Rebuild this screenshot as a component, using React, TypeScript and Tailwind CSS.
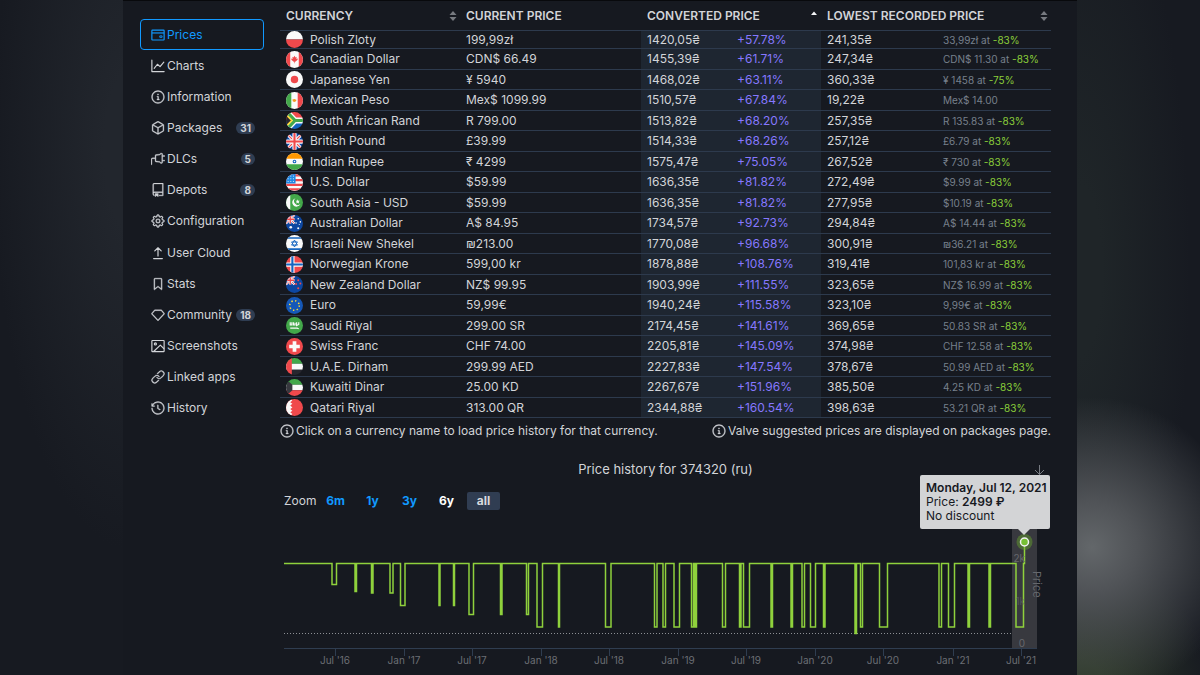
import type { ReactNode } from "react";
import { useId, useState } from "react";
import clsx from "clsx";
import {
  GoBookmark,
  GoGear,
  GoHistory,
  GoInfo,
  GoLink,
  GoPackage,
  GoPlug,
  GoRepo,
  GoRuby,
} from "react-icons/go";

const WalletIcon = () => (
  <svg viewBox="0 0 24 24" className="size-full" fill="none" stroke="currentColor" strokeWidth="2">
    <rect x="1.5" y="3.5" width="21" height="17" rx="1" />
    <path d="M1.5 8.5h21" />
    <path d="M15 13.5h4v2.5h-4z" strokeWidth="1.5" />
  </svg>
);

const ChartIcon = () => (
  <svg viewBox="0 0 24 24" className="size-full" fill="none" stroke="currentColor" strokeWidth="2" strokeLinecap="round" strokeLinejoin="round">
    <path d="M1.5 2v19.5h21" />
    <path d="M5.5 16l5.5-7 4.5 4L22 5.5" />
  </svg>
);

const PushIcon = () => (
  <svg viewBox="0 0 24 24" className="size-full" fill="none" stroke="currentColor" strokeWidth="2" strokeLinecap="round" strokeLinejoin="round">
    <path d="M12 17V3M6.5 8.5L12 3l5.5 5.5M4.5 21.5h15" />
  </svg>
);

const PictureIcon = () => (
  <svg viewBox="0 0 24 24" className="size-full" fill="none" stroke="currentColor" strokeWidth="2" strokeLinejoin="round">
    <rect x="1.5" y="2.5" width="21" height="19" rx="1" />
    <circle cx="7.5" cy="8.5" r="1.8" />
    <path d="M4.500 21.500L16 10.500l6.500 6.500" />
  </svg>
);

const navItems: { label: string; icon: ReactNode; count?: number }[] = [
  { label: "Prices", icon: <WalletIcon /> },
  { label: "Charts", icon: <ChartIcon /> },
  { label: "Information", icon: <GoInfo className="size-full" strokeWidth="0.6" /> },
  { label: "Packages", icon: <GoPackage className="size-full" strokeWidth="0.6" />, count: 31 },
  { label: "DLCs", icon: <GoPlug className="size-full" strokeWidth="0.6" />, count: 5 },
  { label: "Depots", icon: <GoRepo className="size-full" strokeWidth="0.6" />, count: 8 },
  { label: "Configuration", icon: <GoGear className="size-full" strokeWidth="0.6" /> },
  { label: "User Cloud", icon: <PushIcon /> },
  { label: "Stats", icon: <GoBookmark className="size-full" strokeWidth="0.6" /> },
  { label: "Community", icon: <GoRuby className="size-full" strokeWidth="0.6" />, count: 18 },
  { label: "Screenshots", icon: <PictureIcon /> },
  { label: "Linked apps", icon: <GoLink className="size-full" strokeWidth="0.6" /> },
  { label: "History", icon: <GoHistory className="size-full" strokeWidth="0.6" /> },
];

const RED = "#f0494c";
const GREEN = "#43a84a";
const BLUE = "#0d47a1";
const WHITE = "#fafafa";
const BLACK = "#27272f";

const MiniJack = () => (
  <>
    <path d="M0 0h16v16H0z" fill={BLUE} />
    <path d="M0 0l16 16M16 0L0 16" stroke={WHITE} strokeWidth="4" />
    <path d="M0 0l16 16M16 0L0 16" stroke={RED} strokeWidth="1.5" />
    <path d="M8 0v16M0 8h16" stroke={WHITE} strokeWidth="4.5" />
    <path d="M8 0v16M0 8h16" stroke={RED} strokeWidth="2.5" />
  </>
);

// every flag is drawn on a 32x32 board and clipped to a circle
const flags: Record<string, ReactNode> = {
  pl: (
    <>
      <path d="M0 0h32v16H0z" fill={WHITE} />
      <path d="M0 16h32v16H0z" fill={RED} />
    </>
  ),
  ca: (
    <>
      <path d="M0 0h32v32H0z" fill={WHITE} />
      <path d="M0 0h8v32H0zM24 0h8v32h-8z" fill={RED} />
      <path d="M16 9l2 3 2-1-.5 4 3-1-1 3-4 3h-1v3h-1v-3h-1l-4-3-1-3 3 1-.5-4 2 1z" fill={RED} />
    </>
  ),
  jp: (
    <>
      <path d="M0 0h32v32H0z" fill={WHITE} />
      <circle cx="16" cy="16" r="7" fill={RED} />
    </>
  ),
  mx: (
    <>
      <path d="M0 0h32v32H0z" fill={WHITE} />
      <path d="M0 0h10v32H0z" fill={GREEN} />
      <path d="M22 0h10v32H22z" fill={RED} />
      <path d="M12 14l4-1 4 2-3 4-4-1z" fill="#f39a1f" />
    </>
  ),
  za: (
    <>
      <path d="M0 0h32v16H0z" fill={RED} />
      <path d="M0 16h32v16H0z" fill="#1565c0" />
      <path d="M0 -2l17 18L0 34M16 16h18" stroke={WHITE} strokeWidth="11" fill="none" />
      <path d="M0 -2l17 18L0 34M16 16h18" stroke={GREEN} strokeWidth="6" fill="none" />
      <path d="M-2 3l13 13L-2 29z" fill={BLACK} stroke="#fdd835" strokeWidth="3" />
    </>
  ),
  gb: (
    <>
      <path d="M0 0h32v32H0z" fill={BLUE} />
      <path d="M0 0l32 32M32 0L0 32" stroke={WHITE} strokeWidth="6" />
      <path d="M0 0l32 32M32 0L0 32" stroke={RED} strokeWidth="2" />
      <path d="M16 0v32M0 16h32" stroke={WHITE} strokeWidth="8" />
      <path d="M16 0v32M0 16h32" stroke={RED} strokeWidth="4" />
    </>
  ),
  in: (
    <>
      <path d="M0 0h32v32H0z" fill={WHITE} />
      <path d="M0 0h32v11H0z" fill="#ff9800" />
      <path d="M0 21h32v11H0z" fill={GREEN} />
      <circle cx="16" cy="16" r="2.5" fill="none" stroke="#1565c0" strokeWidth="2" />
    </>
  ),
  us: (
    <>
      <path d="M0 0h32v32H0z" fill={WHITE} />
      <path d="M0 2.5h32M0 11.5h32M0 20.5h32M0 29h32" stroke={RED} strokeWidth="4.5" />
      <path d="M0 0h18v18H0z" fill="#1e88e5" />
      <path d="M3 4h14M3 9h14M3 14h14" stroke={WHITE} strokeWidth="1.5" strokeDasharray="2 3" />
    </>
  ),
  pk: (
    <>
      <path d="M0 0h32v32H0z" fill={GREEN} />
      <path d="M0 0h8v32H0z" fill={WHITE} />
      <path d="M18 8a8 8 0 1 0 9 11 7 7 0 1 1-9-11z" fill={WHITE} />
      <path d="M22 10l1 2.5 3 .3-2 2 .5 3-2.5-1.5-2.5 1.5.5-3-2-2 3-.3z" fill={WHITE} />
    </>
  ),
  au: (
    <>
      <path d="M0 0h32v32H0z" fill={BLUE} />
      <MiniJack />
      <circle cx="9" cy="23" r="2.5" fill={WHITE} />
      <circle cx="23" cy="7" r="1.5" fill={WHITE} />
      <circle cx="19" cy="15" r="1.5" fill={WHITE} />
      <circle cx="27" cy="13" r="1.5" fill={WHITE} />
      <circle cx="23" cy="25" r="2" fill={WHITE} />
      <circle cx="25" cy="18" r="1" fill={WHITE} />
    </>
  ),
  il: (
    <>
      <path d="M0 0h32v32H0z" fill={WHITE} />
      <path d="M0 5.5h32M0 26.5h32" stroke="#1565c0" strokeWidth="3" />
      <path d="M16 9.5l5.5 9.5h-11zM16 22.5l5.5-9.5h-11z" fill="none" stroke="#1565c0" strokeWidth="1.8" />
    </>
  ),
  no: (
    <>
      <path d="M0 0h32v32H0z" fill={RED} />
      <path d="M12 0v32M0 16h32" stroke={WHITE} strokeWidth="8" />
      <path d="M12 0v32M0 16h32" stroke="#1565c0" strokeWidth="4" />
    </>
  ),
  nz: (
    <>
      <path d="M0 0h32v32H0z" fill={BLUE} />
      <MiniJack />
      <circle cx="23" cy="8" r="1.8" fill={RED} />
      <circle cx="19" cy="15" r="1.8" fill={RED} />
      <circle cx="27" cy="14" r="1.8" fill={RED} />
      <circle cx="23" cy="23" r="2" fill={RED} />
    </>
  ),
  eu: (
    <>
      <path d="M0 0h32v32H0z" fill="#1558b8" />
      <circle cx="16" cy="16" r="9" fill="none" stroke="#fdd835" strokeWidth="3" strokeDasharray="2.5 4.57" />
    </>
  ),
  sa: (
    <>
      <path d="M0 0h32v32H0z" fill={GREEN} />
      <path d="M8 10v5h3v-5M14 10v5h3v-4M20 10v6l4-2v-4M8 21h13l3 1" fill="none" stroke={WHITE} strokeWidth="2.2" />
    </>
  ),
  ch: (
    <>
      <path d="M0 0h32v32H0z" fill={RED} />
      <path d="M16 6v20M6 16h20" stroke={WHITE} strokeWidth="7" />
    </>
  ),
  ae: (
    <>
      <path d="M0 0h32v11H0z" fill={GREEN} />
      <path d="M0 11h32v11H0z" fill={WHITE} />
      <path d="M0 22h32v10H0z" fill={BLACK} />
      <path d="M0 0h11v32H0z" fill={RED} />
    </>
  ),
  kw: (
    <>
      <path d="M0 0h32v11H0z" fill={GREEN} />
      <path d="M0 11h32v10H0z" fill={WHITE} />
      <path d="M0 21h32v11H0z" fill={RED} />
      <path d="M0 0l12 11v10L0 32z" fill="#37383f" />
    </>
  ),
  qa: (
    <>
      <path d="M0 0h32v32H0z" fill={RED} />
      <path d="M0 0h8l4 3-4 3 4 3-4 3 4 4-4 3 4 3-4 3 4 3-4 4H0z" fill={WHITE} />
    </>
  ),
};

const Flag = ({ code }: { code: string }) => {
  const id = useId();
  return (
    <svg viewBox="0 0 32 32" className="size-[17px] shrink-0" aria-hidden="true">
      <clipPath id={id}>
        <circle cx="16" cy="16" r="16" />
      </clipPath>
      <g clipPath={`url(#${id})`}>{flags[code]}</g>
    </svg>
  );
};

const prices = [
  { code: "pl", name: "Polish Zloty", current: "199,99zł", converted: "1420,05₴", diff: "+57.78%", lowest: "241,35₴", at: "33,99zł", cut: "-83%" },
  { code: "ca", name: "Canadian Dollar", current: "CDN$ 66.49", converted: "1455,39₴", diff: "+61.71%", lowest: "247,34₴", at: "CDN$ 11.30", cut: "-83%" },
  { code: "jp", name: "Japanese Yen", current: "¥ 5940", converted: "1468,02₴", diff: "+63.11%", lowest: "360,33₴", at: "¥ 1458", cut: "-75%" },
  { code: "mx", name: "Mexican Peso", current: "Mex$ 1099.99", converted: "1510,57₴", diff: "+67.84%", lowest: "19,22₴", at: "Mex$ 14.00" },
  { code: "za", name: "South African Rand", current: "R 799.00", converted: "1513,82₴", diff: "+68.20%", lowest: "257,35₴", at: "R 135.83", cut: "-83%" },
  { code: "gb", name: "British Pound", current: "£39.99", converted: "1514,33₴", diff: "+68.26%", lowest: "257,12₴", at: "£6.79", cut: "-83%" },
  { code: "in", name: "Indian Rupee", current: "₹ 4299", converted: "1575,47₴", diff: "+75.05%", lowest: "267,52₴", at: "₹ 730", cut: "-83%" },
  { code: "us", name: "U.S. Dollar", current: "$59.99", converted: "1636,35₴", diff: "+81.82%", lowest: "272,49₴", at: "$9.99", cut: "-83%" },
  { code: "pk", name: "South Asia - USD", current: "$59.99", converted: "1636,35₴", diff: "+81.82%", lowest: "277,95₴", at: "$10.19", cut: "-83%" },
  { code: "au", name: "Australian Dollar", current: "A$ 84.95", converted: "1734,57₴", diff: "+92.73%", lowest: "294,84₴", at: "A$ 14.44", cut: "-83%" },
  { code: "il", name: "Israeli New Shekel", current: "₪213.00", converted: "1770,08₴", diff: "+96.68%", lowest: "300,91₴", at: "₪36.21", cut: "-83%" },
  { code: "no", name: "Norwegian Krone", current: "599,00 kr", converted: "1878,88₴", diff: "+108.76%", lowest: "319,41₴", at: "101,83 kr", cut: "-83%" },
  { code: "nz", name: "New Zealand Dollar", current: "NZ$ 99.95", converted: "1903,99₴", diff: "+111.55%", lowest: "323,65₴", at: "NZ$ 16.99", cut: "-83%" },
  { code: "eu", name: "Euro", current: "59,99€", converted: "1940,24₴", diff: "+115.58%", lowest: "323,10₴", at: "9,99€", cut: "-83%" },
  { code: "sa", name: "Saudi Riyal", current: "299.00 SR", converted: "2174,45₴", diff: "+141.61%", lowest: "369,65₴", at: "50.83 SR", cut: "-83%" },
  { code: "ch", name: "Swiss Franc", current: "CHF 74.00", converted: "2205,81₴", diff: "+145.09%", lowest: "374,98₴", at: "CHF 12.58", cut: "-83%" },
  { code: "ae", name: "U.A.E. Dirham", current: "299.99 AED", converted: "2227,83₴", diff: "+147.54%", lowest: "378,67₴", at: "50.99 AED", cut: "-83%" },
  { code: "kw", name: "Kuwaiti Dinar", current: "25.00 KD", converted: "2267,67₴", diff: "+151.96%", lowest: "385,50₴", at: "4.25 KD", cut: "-83%" },
  { code: "qa", name: "Qatari Riyal", current: "313.00 QR", converted: "2344,88₴", diff: "+160.54%", lowest: "398,63₴", at: "53.21 QR", cut: "-83%" },
];

const SortArrows = ({ sorted }: { sorted?: boolean }) => (
  <svg viewBox="0 0 8 12" className={clsx("h-3 w-2", sorted ? "text-gray-100" : "text-[#777a80]")} fill="currentColor" aria-hidden="true">
    {sorted ? (
      <path d="M1 5h6L4 1.5z" />
    ) : (
      <path d="M.5 5h7L4 1zM.5 7h7L4 11z" />
    )}
  </svg>
);

const HeadCell = ({ label, span, arrows = true, sorted }: { label: string; span?: number; arrows?: boolean; sorted?: boolean }) => (
  <th colSpan={span} scope="col" className="h-[30px] border-b border-[#2d3a4d] p-0 text-left font-semibold">
    <button type="button" className="flex w-full items-center justify-between pr-[3px] pl-1.5 leading-4 uppercase">
      {label}
      {arrows && <SortArrows sorted={sorted} />}
    </button>
  </th>
);

const PriceTable = () => (
  <table className="w-full table-fixed border-separate border-spacing-0 leading-4">
    <colgroup>
      <col className="w-[180px]" />
      <col className="w-[181px]" />
      <col className="w-[90px]" />
      <col className="w-[90px]" />
      <col className="w-[116px]" />
      <col />
    </colgroup>
    <thead>
      <tr>
        <HeadCell label="Currency" />
        <HeadCell label="Current price" arrows={false} />
        <HeadCell label="Converted price" span={2} sorted />
        <HeadCell label="Lowest recorded price" span={2} />
      </tr>
    </thead>
    <tbody>
      {prices.map((row) => (
        <tr key={row.code} className="h-5 *:border-b *:border-[#2d3a4d] *:px-1.5 *:py-0 first:h-[18px] even:h-[21px]">
          <td>
            <button type="button" className="flex items-center gap-[7px] leading-4">
              <Flag code={row.code} />
              {row.name}
            </button>
          </td>
          <td>{row.current}</td>
          <td className="bg-[#1e2631]">{row.converted}</td>
          <td className="bg-[#1e2631] text-[#8678ff]">{row.diff}</td>
          <td>{row.lowest}</td>
          <td className="text-[10px] whitespace-nowrap text-[#76808c]">
            {row.at}
            {row.cut && (
              <>
                {" at "}
                <span className="text-[#8bcf3a]">{row.cut}</span>
              </>
            )}
          </td>
        </tr>
      ))}
    </tbody>
  </table>
);

// sales: [start x, end x, lowest y]
const sales = [
  [52, 56.5, 64.5],
  [75, 76.5, 71.5],
  [91.5, 93, 73],
  [110, 113, 73],
  [120.5, 125, 85.5],
  [159, 160, 85.5],
  [173.5, 174.5, 85.5],
  [189, 193.5, 94.5],
  [220.5, 222, 94.5],
  [246.5, 248.5, 94.5],
  [257, 262.5, 107],
  [278.5, 279.5, 107],
  [325.5, 331, 107],
  [374.5, 377, 107],
  [383, 385.5, 107],
  [394, 399.5, 107],
  [411.5, 413.5, 107],
  [415, 416.5, 107],
  [442.5, 445.5, 107],
  [459.5, 461, 107],
  [463.5, 469.5, 107],
  [491, 492.5, 107],
  [511, 512.5, 107],
  [522, 524.5, 107],
  [530.5, 535.5, 107],
  [543.5, 545, 107],
  [575, 576.5, 113.5],
  [580.5, 582.5, 107],
  [599.5, 607.5, 107],
  [659, 661.5, 107],
  [668.5, 674.5, 107],
  [688, 689.5, 107],
  [709, 710.5, 107],
  [736, 743.5, 107],
];

const ticks = [
  { x: 55, label: "Jul '16" },
  { x: 124, label: "Jan '17" },
  { x: 192, label: "Jul '17" },
  { x: 261, label: "Jan '18" },
  { x: 329, label: "Jul '18" },
  { x: 398, label: "Jan '19" },
  { x: 466, label: "Jul '19" },
  { x: 535, label: "Jan '20" },
  { x: 603, label: "Jul '20" },
  { x: 673, label: "Jan '21" },
  { x: 741, label: "Jul '21" },
];

const pricePath =
  "M4 43.5" + sales.map(([from, to, low]) => `H${from}V${low}H${to}V43.5`).join("") + "H744.5V22";

const ranges = ["6m", "1y", "3y", "6y", "all"];

const PriceHistory = () => {
  const [range, setRange] = useState("all");

  return (
    <section className="relative pt-[18px]">
      <h2 className="text-center text-[13px] leading-5">Price history for 374320 (ru)</h2>
      <svg viewBox="0 0 14 14" className="absolute top-6 right-[5px] size-3.5 text-[#777b82]" fill="none" stroke="currentColor" aria-hidden="true">
        <path d="M7.5 0v9.5M3 5l4.5 4.5L12 5M1 12.5h12" />
      </svg>

      <div className="mt-3 flex items-center gap-1 pl-1">
        <span className="w-[31px] leading-5">Zoom</span>
        {ranges.map((item) => (
          <button
            key={item}
            type="button"
            onClick={() => setRange(item)}
            className={clsx(
              "h-[18px] w-[33px] rounded-xs leading-4 font-bold",
              item === range && "bg-[#303d52] text-[#d8dade]",
              item === "6y" && item !== range && "text-white",
              item !== "6y" && item !== range && "text-[#1199ff]",
            )}
          >
            {item}
          </button>
        ))}
      </div>

      <div className="relative mt-[9px]">
        <svg viewBox="0 0 771 150" className="block w-full text-[10px]" role="img" aria-label="Price history chart">
          <g stroke="#2f3d50">
            <path d="M4 128.5h753" />
            {ticks.map((tick) => (
              <path key={tick.label} d={`M${tick.x + 0.5} 129v7`} />
            ))}
          </g>
          <g fill="#6b6e74" textAnchor="middle">
            {ticks.map((tick) => (
              <text key={tick.label} x={tick.x} y="144">
                {tick.label}
              </text>
            ))}
          </g>
          <path d="M4 113.5h740" stroke="#8c8f94" strokeDasharray="1 2" />
          <path d="M732 1h25v127h-25z" fill="#38393f" />
          <path d={pricePath} fill="none" stroke="#8fd13c" strokeWidth="1.5" />
          <g fill="#66686d" textAnchor="end">
            <text x="745" y="42">2k</text>
            <text x="745" y="85" fillOpacity="0.6">1k</text>
            <text x="745" y="127">0</text>
          </g>
          <text transform="translate(753 51) rotate(90)" fill="#66686d" fontSize="11">
            Price
          </text>
          <circle cx="744.5" cy="22" r="8" fill="#6fb52a" fillOpacity="0.4" />
          <circle cx="744.5" cy="22" r="4" fill="#76c032" stroke="#f2f2f2" strokeWidth="1.5" />
        </svg>

        <div role="tooltip" className="absolute right-px bottom-[141px] w-[130px] rounded-xs bg-[#d3d4d6] px-1.5 py-1.5 leading-[14px] whitespace-nowrap text-[#17191f]">
          <p className="font-semibold">Monday, Jul 12, 2021</p>
          <p>
            Price: <b className="font-semibold">2499 ₽</b>
          </p>
          <p>No discount</p>
          <svg viewBox="0 0 12 6" className="absolute top-full right-5 h-1.5 w-3 text-[#d3d4d6]" fill="currentColor" aria-hidden="true">
            <path d="M0 0h12L6 6z" />
          </svg>
        </div>
      </div>
    </section>
  );
};

const Sidebar = () => (
  <nav className="grid h-[405px] w-[124px] shrink-0 auto-rows-fr">
    {navItems.map((item) => (
      <a
        key={item.label}
        href={`#${item.label.toLowerCase().replace(" ", "-")}`}
        className={clsx(
          "flex items-center gap-0.5 rounded-sm border pr-2 pl-2.5 leading-5",
          item.label === "Prices" ? "border-[#1199ff] text-[#1199ff]" : "border-transparent",
        )}
      >
        <span className="size-3.5 shrink-0">{item.icon}</span>
        {item.label}
        {item.count && (
          <span className="ml-auto rounded-full bg-[#2f3d52] px-1 text-[10px] leading-3 font-bold">{item.count}</span>
        )}
      </a>
    ))}
  </nav>
);

export default function App() {
  return (
    <div className="min-h-screen bg-[#171a21] bg-[radial-gradient(150px_150px_at_91%_547px,#63676a_0%,#505357_30%,transparent_100%),radial-gradient(130px_140px_at_90%_690px,#2e3a29_20%,transparent_100%),radial-gradient(110px_420px_at_90%_270px,#1f2528_20%,transparent_100%),radial-gradient(140px_400px_at_11%_150px,#22262d_20%,transparent_100%)] font-['Inter','Noto_Sans',sans-serif] text-xs text-[#d2d4d8]">
      <div className="mx-auto flex min-h-screen max-w-[954px] items-start gap-4 border-t border-[#08090c] bg-[#161920] pr-[26px] pl-[17px]">
        <div className="pt-[18px]">
          <Sidebar />
        </div>
        <main className="min-w-0 flex-1">
          <PriceTable />
          <div className="flex justify-between pt-[3px] leading-5">
            <p className="flex items-center gap-0.5">
              <GoInfo className="size-3.5 shrink-0" strokeWidth="0.6" />
              Click on a currency name to load price history for that currency.
            </p>
            <p className="flex items-center gap-0.5">
              <GoInfo className="size-3.5 shrink-0" strokeWidth="0.6" />
              Valve suggested prices are displayed on packages page.
            </p>
          </div>
          <PriceHistory />
        </main>
      </div>
    </div>
  );
}
